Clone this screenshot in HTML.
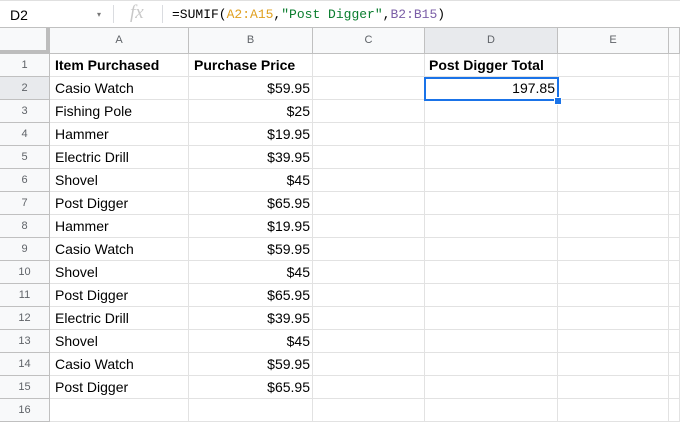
<!DOCTYPE html><html><head><style>
body{margin:0;width:680px;height:414px;overflow:hidden;background:#fff;font-family:"Liberation Sans",Arial,sans-serif;position:relative}
.a{position:absolute}
.h{position:absolute;background:#f8f9fa;color:#5f6368;font-size:11px;text-align:center;border-right:1px solid #c0c0c0;border-bottom:1px solid #c0c0c0;box-sizing:border-box}
.c{position:absolute;font-size:14px;color:#000;line-height:23px;white-space:nowrap;box-sizing:border-box}
</style></head><body>
<div class="a" style="left:0;top:0;width:680px;height:28px;border-top:1px solid #e0e0e0;border-bottom:1px solid #c0c0c0;box-sizing:border-box"></div>
<div class="a" style="left:10px;top:7px;font-size:14px;color:#000">D2</div>
<div class="a" style="left:97px;top:10px;font-size:8px;color:#777">▾</div>
<div class="a" style="left:113px;top:5px;width:1px;height:18px;background:#dadce0"></div>
<div class="a" style="left:130px;top:2px;font-family:'Liberation Serif',serif;font-style:italic;font-size:19px;color:#c8c8c8">fx</div>
<div class="a" style="left:162px;top:5px;width:1px;height:18px;background:#dadce0"></div>
<div class="a" style="left:172px;top:7px;font-family:'Liberation Mono',monospace;font-size:13px;color:#000">=SUMIF(<span style="color:#e0a020">A2:A15</span>,<span style="color:#0a7d2e">"Post Digger"</span>,<span style="color:#7b5ea7">B2:B15</span>)</div>
<div class="a" style="left:0;top:28px;width:50px;height:26px;background:#f8f9fa;border-right:4px solid #bdbdbd;border-bottom:4px solid #bdbdbd;box-sizing:border-box"></div>
<div class="h" style="left:50px;top:28px;width:139px;height:26px;line-height:25px">A</div>
<div class="h" style="left:189px;top:28px;width:124px;height:26px;line-height:25px">B</div>
<div class="h" style="left:313px;top:28px;width:112px;height:26px;line-height:25px">C</div>
<div class="h" style="left:425px;top:28px;width:133px;height:26px;line-height:25px;background:#e8eaed">D</div>
<div class="h" style="left:558px;top:28px;width:111px;height:26px;line-height:25px">E</div>
<div class="h" style="left:669px;top:28px;width:11px;height:26px"></div>
<div id="g"></div>
<script>
var d=[["Item Purchased","Purchase Price"],["Casio Watch","$59.95"],["Fishing Pole","$25"],["Hammer","$19.95"],["Electric Drill","$39.95"],["Shovel","$45"],["Post Digger","$65.95"],["Hammer","$19.95"],["Casio Watch","$59.95"],["Shovel","$45"],["Post Digger","$65.95"],["Electric Drill","$39.95"],["Shovel","$45"],["Casio Watch","$59.95"],["Post Digger","$65.95"],["",""]];
var h="",cols=[50,189,313,425,558,669,680];
for(var i=0;i<16;i++){var y=54+i*23;
h+='<div class="h" style="left:0;top:'+y+'px;width:50px;height:23px;line-height:22px;'+(i==1?'background:#e8eaed;':'')+'">'+(i+1)+'</div>';
for(var j=0;j<6;j++)h+='<div class="a" style="left:'+cols[j]+'px;top:'+y+'px;width:'+(cols[j+1]-cols[j])+'px;height:23px;border-right:1px solid #e2e2e2;border-bottom:1px solid #e2e2e2;box-sizing:border-box"></div>';
var b=i==0?'font-weight:bold;':'';
h+='<div class="c" style="left:55px;top:'+y+'px;'+b+'">'+d[i][0]+'</div>';
h+='<div class="c" style="left:189px;width:121px;top:'+y+'px;'+(i==0?'text-align:left;padding-left:5px;':'text-align:right;')+b+'">'+d[i][1]+'</div>';}
h+='<div class="c" style="left:429px;top:54px;font-weight:bold">Post Digger Total</div>';
h+='<div class="a" style="left:424px;top:77px;width:135px;height:24px;border:2px solid #1a73e8;box-sizing:border-box"></div>';
h+='<div class="c" style="left:425px;width:130px;top:77px;text-align:right">197.85</div>';
h+='<div class="a" style="left:554px;top:97px;width:6px;height:6px;background:#1a73e8;border:1px solid #fff"></div>';
document.getElementById("g").innerHTML=h;
</script>
</body></html>
